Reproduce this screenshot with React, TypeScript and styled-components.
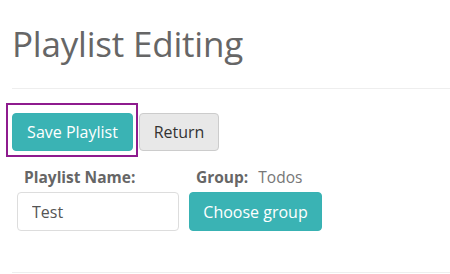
import React from "react";
import styled, { createGlobalStyle } from "styled-components";

const Global = createGlobalStyle`
  html, body { margin: 0; padding: 0; background: #fff; }
  body { font-family: "Open Sans", "Noto Sans", sans-serif; }
  * { box-sizing: border-box; }
`;

const Page = styled.div`
  width: 450px;
  height: 274px;
  padding-left: 6px;
  overflow: hidden;
`;

const Header = styled.div`
  margin-left: 6px;
  height: 89px;
  padding-top: 24px;
  border-bottom: 1px solid #eeeeee;
`;

const Title = styled.h1`
  margin: 0;
  font-size: 35px;
  font-weight: 400;
  color: #666;
  line-height: 40px;
  letter-spacing: -0.2px;
`;

const Toolbar = styled.div`
  display: flex;
  align-items: flex-start;
  margin-top: 14px;
`;

const Focus = styled.div`
  border: 2px solid #8e1b8e;
  padding: 8px 3px 4px 4px;
`;

const Button = styled.button<{ $variant?: "primary" | "default" }>`
  height: 38px;
  padding: 0 14px;
  border-radius: 4px;
  font-family: "Open Sans", "Noto Sans", sans-serif;
  font-size: 16px;
  font-weight: 500;
  cursor: pointer;
  border: 1px solid ${(p) => (p.$variant === "primary" ? "#38b2b3" : "#cccccc")};
  background: ${(p) => (p.$variant === "primary" ? "#3ab3b4" : "#e8e8e8")};
  color: ${(p) => (p.$variant === "primary" ? "#ffffff" : "#333333")};
`;

const ReturnButton = styled(Button)`
  margin-top: 10px;
  margin-left: 1px;
  width: 80px;
  padding: 0;
`;

const SaveButton = styled(Button)`
  width: 121px;
  padding: 0;
`;

const Form = styled.div`
  display: flex;
  gap: 10px;
  padding-left: 11px;
  margin-top: 8px;
`;

const Field = styled.div`
  display: flex;
  flex-direction: column;
  gap: 3px;
`;

const Label = styled.div`
  padding-left: 7px;
  height: 24px;
  line-height: 24px;
  font-size: 15.5px;
  font-weight: 700;
  color: #666;
  white-space: nowrap;
`;

const Value = styled.span`
  font-weight: 400;
  color: #777;
  margin-left: 10px;
`;

const Input = styled.input`
  width: 162px;
  height: 39px;
  border: 1px solid #dddddd;
  border-radius: 4px;
  padding: 0 14px;
  font-family: "Open Sans", "Noto Sans", sans-serif;
  font-size: 16px;
  color: #555;
  outline: none;
`;

const GroupButton = styled(Button)`
  height: 39px;
  width: 133px;
  padding: 0;
`;

const Footer = styled.div`
  margin-left: 6px;
  margin-top: 41px;
  border-top: 1px solid #eeeeee;
`;

export default function App() {
  return (
    <>
      <Global />
      <Page>
        <Header>
          <Title>Playlist Editing</Title>
        </Header>
        <Toolbar>
          <Focus>
            <SaveButton $variant="primary">Save Playlist</SaveButton>
          </Focus>
          <ReturnButton>Return</ReturnButton>
        </Toolbar>
        <Form>
          <Field>
            <Label>Playlist Name:</Label>
            <Input defaultValue="Test" />
          </Field>
          <Field>
            <Label>
              Group:<Value>Todos</Value>
            </Label>
            <GroupButton $variant="primary">Choose group</GroupButton>
          </Field>
        </Form>
        <Footer />
      </Page>
    </>
  );
}
